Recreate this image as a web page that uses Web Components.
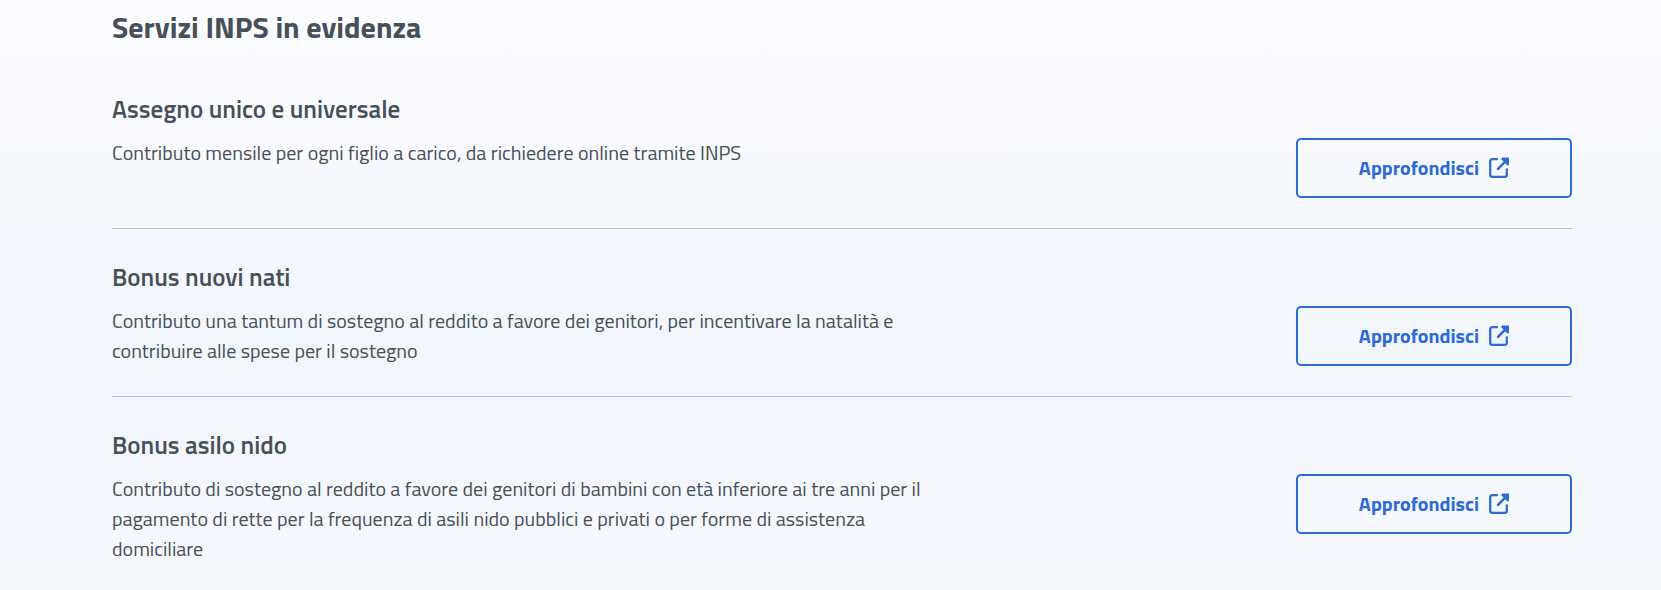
<!DOCTYPE html>
<html lang="it">
<head>
<meta charset="utf-8">
<meta name="viewport" content="width=device-width, initial-scale=1">
<title>Servizi INPS in evidenza</title>
<style>
  body {
    margin: 0;
    min-height: 100vh;
    font-family: "Titillium Web", "Open Sans", sans-serif;
    color: #455058;
    background: linear-gradient(180deg, #fbfcff 0%, #f1f5fc 60%, #f6f9fe 100%);
  }
</style>
</head>
<body>
  <services-section>
    <span slot="title">Servizi INPS in evidenza</span>
    <service-item>
      <span slot="title">Assegno unico e universale</span>
      Contributo mensile per ogni figlio a carico, da richiedere online tramite INPS
      <external-link slot="action" href="#assegno-unico">Approfondisci</external-link>
    </service-item>
    <service-item>
      <span slot="title">Bonus nuovi nati</span>
      Contributo una tantum di sostegno al reddito a favore dei genitori, per incentivare la natalità e contribuire alle spese per il sostegno
      <external-link slot="action" href="#bonus-nuovi-nati">Approfondisci</external-link>
    </service-item>
    <service-item>
      <span slot="title">Bonus asilo nido</span>
      Contributo di sostegno al reddito a favore dei genitori di bambini con età inferiore ai tre anni per il pagamento di rette per la frequenza di asili nido pubblici e privati o per forme di assistenza domiciliare
      <external-link slot="action" href="#bonus-asilo-nido">Approfondisci</external-link>
    </service-item>
  </services-section>

<script>
/**
 * ServicesSection - titled list of services
 */
class ServicesSection extends HTMLElement {
  constructor() {
    super();
    this.attachShadow({ mode: 'open' });
  }

  connectedCallback() {
    this.shadowRoot.innerHTML = `
      <style>
        :host {
          display: block;
          padding: 9px 89px 0 112px;
        }

        h2 {
          margin: 0 0 16px;
          font-size: 30px;
          line-height: 36px;
          font-weight: 700;
        }

        ::slotted(service-item:not(:last-child)) {
          border-bottom: 1px solid #a9c6f0;
        }
      </style>

      <section>
        <h2><slot name="title"></slot></h2>
        <slot></slot>
      </section>
    `;
  }
}

/**
 * ServiceItem - title, description and an action on the right
 */
class ServiceItem extends HTMLElement {
  constructor() {
    super();
    this.attachShadow({ mode: 'open' });
  }

  connectedCallback() {
    this.shadowRoot.innerHTML = `
      <style>
        :host {
          display: block;
          padding: 32px 0 30px;
        }

        h3 {
          margin: 0 0 13px;
          font-size: 25px;
          line-height: 32px;
          font-weight: 600;
        }

        .row {
          display: flex;
          justify-content: space-between;
          align-items: flex-start;
          gap: 24px;
        }

        p {
          flex: 0 1 57%;
          margin: 0;
          font-size: 20px;
          line-height: 30px;
          font-weight: 400;
        }
      </style>

      <article>
        <h3><slot name="title"></slot></h3>
        <div class="row">
          <p><slot></slot></p>
          <slot name="action"></slot>
        </div>
      </article>
    `;
  }
}

/**
 * ExternalLink - outlined link with the external icon
 */
class ExternalLink extends HTMLElement {
  constructor() {
    super();
    this.attachShadow({ mode: 'open' });
  }

  static get observedAttributes() {
    return ['href'];
  }

  connectedCallback() {
    this.render();
  }

  attributeChangedCallback() {
    this.render();
  }

  render() {
    const href = this.getAttribute('href') || '#';

    this.shadowRoot.innerHTML = `
      <style>
        :host {
          display: block;
          flex: none;
          width: 276px;
          font-weight: 700;
        }

        a {
          display: flex;
          align-items: center;
          justify-content: center;
          gap: 10px;
          box-sizing: border-box;
          height: 60px;
          border: 2px solid currentColor;
          border-radius: 5px;
          color: #2e6bd6;
          font-size: 20px;
          line-height: 24px;
          text-decoration: none;
        }

        a:hover {
          color: #1f55b5;
        }
      </style>

      <a href="${href}">
        <span><slot></slot></span>
        <svg width="20" height="22" viewBox="0 0 20 22" fill="none" aria-hidden="true">
          <path d="M8 2.200H3.200a2 2 0 0 0-2 2v13.600a2 2 0 0 0 2 2h12.600a2 2 0 0 0 2-2V12.500" stroke="currentColor" stroke-width="2.300" stroke-linecap="round"/>
          <path d="M9 11.800L16.500 4.300" stroke="currentColor" stroke-width="2.600" stroke-linecap="round"/>
          <path d="M13 .500h6.400a.6.600 0 0 1 .6.600V7.700l-1.600.8-6.400-6.400z" fill="currentColor"/>
        </svg>
      </a>
    `;
  }
}

customElements.define('services-section', ServicesSection);
customElements.define('service-item', ServiceItem);
customElements.define('external-link', ExternalLink);
</script>
</body>
</html>
